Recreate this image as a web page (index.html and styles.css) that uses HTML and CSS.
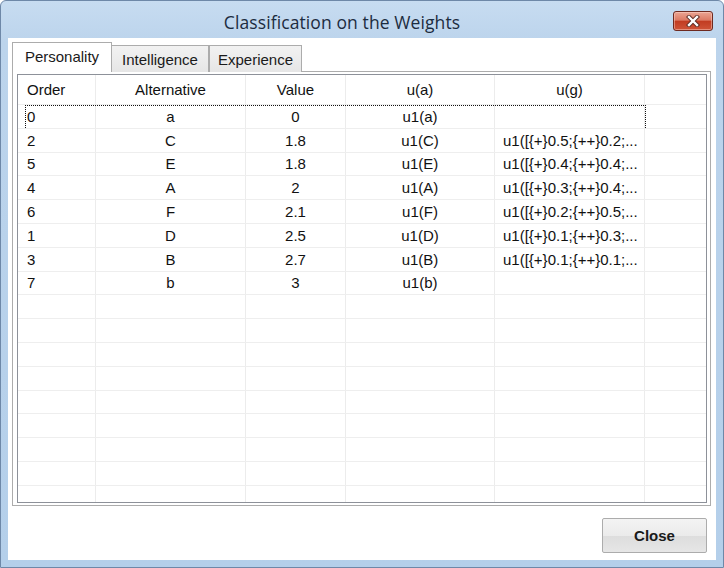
FILE: index.html
```html
<!DOCTYPE html>
<html>
<head>
<meta charset="utf-8">
<link rel="stylesheet" href="styles.css">
</head>
<body>
<div class="window">
  <div class="titlebar">
    <div class="title">Classification on the Weights</div>
    <div class="xbtn">
      <svg width="14" height="12" viewBox="0 0 14 12">
        <path d="M3 2 L11 10 M11 2 L3 10" stroke="#5a2a22" stroke-width="4.2" stroke-linecap="square" fill="none"/>
        <path d="M3 2 L11 10 M11 2 L3 10" stroke="#ffffff" stroke-width="2.4" stroke-linecap="square" fill="none"/>
      </svg>
    </div>
  </div>
  <div class="client">
    <div class="tabs">
      <div class="tab active">Personality</div>
      <div class="tab t2">Intelligence</div>
      <div class="tab t3">Experience</div>
    </div>
    <div class="panel">
      <div class="grid">
        <div class="row head">
          <div class="c c1">Order</div><div class="c c2">Alternative</div><div class="c c3">Value</div><div class="c c4">u(a)</div><div class="c c5">u(g)</div><div class="c c6"></div>
        </div>
        <div class="row focused">
          <div class="c c1">0</div><div class="c c2">a</div><div class="c c3">0</div><div class="c c4">u1(a)</div><div class="c c5"></div><div class="c c6"></div>
          <div class="focus"></div>
        </div>
        <div class="row"><div class="c c1">2</div><div class="c c2">C</div><div class="c c3">1.8</div><div class="c c4">u1(C)</div><div class="c c5 g">u1([{+}0.5;{++}0.2;...</div><div class="c c6"></div></div>
        <div class="row"><div class="c c1">5</div><div class="c c2">E</div><div class="c c3">1.8</div><div class="c c4">u1(E)</div><div class="c c5 g">u1([{+}0.4;{++}0.4;...</div><div class="c c6"></div></div>
        <div class="row"><div class="c c1">4</div><div class="c c2">A</div><div class="c c3">2</div><div class="c c4">u1(A)</div><div class="c c5 g">u1([{+}0.3;{++}0.4;...</div><div class="c c6"></div></div>
        <div class="row"><div class="c c1">6</div><div class="c c2">F</div><div class="c c3">2.1</div><div class="c c4">u1(F)</div><div class="c c5 g">u1([{+}0.2;{++}0.5;...</div><div class="c c6"></div></div>
        <div class="row"><div class="c c1">1</div><div class="c c2">D</div><div class="c c3">2.5</div><div class="c c4">u1(D)</div><div class="c c5 g">u1([{+}0.1;{++}0.3;...</div><div class="c c6"></div></div>
        <div class="row"><div class="c c1">3</div><div class="c c2">B</div><div class="c c3">2.7</div><div class="c c4">u1(B)</div><div class="c c5 g">u1([{+}0.1;{++}0.1;...</div><div class="c c6"></div></div>
        <div class="row"><div class="c c1">7</div><div class="c c2">b</div><div class="c c3">3</div><div class="c c4">u1(b)</div><div class="c c5"></div><div class="c c6"></div></div>
        <div class="row"><div class="c c1"></div><div class="c c2"></div><div class="c c3"></div><div class="c c4"></div><div class="c c5"></div><div class="c c6"></div></div>
        <div class="row"><div class="c c1"></div><div class="c c2"></div><div class="c c3"></div><div class="c c4"></div><div class="c c5"></div><div class="c c6"></div></div>
        <div class="row"><div class="c c1"></div><div class="c c2"></div><div class="c c3"></div><div class="c c4"></div><div class="c c5"></div><div class="c c6"></div></div>
        <div class="row"><div class="c c1"></div><div class="c c2"></div><div class="c c3"></div><div class="c c4"></div><div class="c c5"></div><div class="c c6"></div></div>
        <div class="row"><div class="c c1"></div><div class="c c2"></div><div class="c c3"></div><div class="c c4"></div><div class="c c5"></div><div class="c c6"></div></div>
        <div class="row"><div class="c c1"></div><div class="c c2"></div><div class="c c3"></div><div class="c c4"></div><div class="c c5"></div><div class="c c6"></div></div>
        <div class="row"><div class="c c1"></div><div class="c c2"></div><div class="c c3"></div><div class="c c4"></div><div class="c c5"></div><div class="c c6"></div></div>
        <div class="row"><div class="c c1"></div><div class="c c2"></div><div class="c c3"></div><div class="c c4"></div><div class="c c5"></div><div class="c c6"></div></div>
        <div class="row"><div class="c c1"></div><div class="c c2"></div><div class="c c3"></div><div class="c c4"></div><div class="c c5"></div><div class="c c6"></div></div>
      </div>
    </div>
    <div class="footer">
      <button class="close">Close</button>
    </div>
  </div>
</div>
</body>
</html>
```
FILE: styles.css
```css
html, body {
  margin: 0;
  padding: 0;
  width: 724px;
  height: 568px;
  overflow: hidden;
}
.window {
  box-sizing: border-box;
  width: 724px;
  height: 568px;
  border: 1px solid #6e88a8;
  border-radius: 6px 6px 0 0;
  background: linear-gradient(to bottom, #c7dcf1 0px, #bcd4ec 40px, #b4cfea 100%);
  display: flex;
  flex-direction: column;
}
.titlebar {
  height: 37px;
  display: flex;
  align-items: flex-start;
}
.title {
  flex: 1;
  text-align: center;
  padding-left: 10px;
  padding-top: 10px;
  font-family: "Open Sans", "Noto Sans", sans-serif;
  font-size: 17.5px;
  letter-spacing: 0.1px;
  color: #1c2c40;
  line-height: 22px;
}
.xbtn {
  margin-top: 10px;
  margin-right: 10px;
  width: 40px;
  height: 20px;
  box-sizing: border-box;
  border: 1px solid #6e2a20;
  border-radius: 3px;
  background: linear-gradient(to bottom, #eba593 0%, #dc7a64 45%, #c23c22 52%, #cf5438 100%);
  box-shadow: inset 0 0 0 1px rgba(255,220,210,0.45);
  display: flex;
  align-items: center;
  justify-content: center;
}
.client {
  flex: 1;
  margin: 0 7px 7px 7px;
  background: #ffffff;
  display: flex;
  flex-direction: column;
}
.tabs {
  display: flex;
  align-items: flex-end;
  height: 30px;
  margin: 4px 0 -1px 4px;
  position: relative;
  z-index: 1;
}
.tab {
  box-sizing: border-box;
  height: 27px;
  border: 1px solid #acacac;
  border-bottom: none;
  background: linear-gradient(to bottom, #f2f2f2, #e6e6e6);
  font-family: "Liberation Sans", Arial, sans-serif;
  font-size: 15px;
  color: #1a1a1a;
  display: flex;
  align-items: center;
  justify-content: center;
  padding-top: 0;
}
.tab.active {
  width: 100px;
  height: 30px;
  background: #ffffff;
  padding-top: 0;
  padding-bottom: 2px;
}
.tab.t2 { width: 97px; border-left: none; }
.tab.t3 { width: 93px; border-left: 1px solid #acacac; }
.panel {
  box-sizing: border-box;
  height: 435px;
  margin: 0 5px 0 4px;
  border: 1px solid #acacac;
  padding: 2px 3px 2px 4px;
  display: flex;
}
.grid {
  flex: 1;
  border: 1px solid #8d9199;
  overflow: hidden;
  font-family: "Liberation Sans", Arial, sans-serif;
  font-size: 15px;
  color: #111111;
}
.row {
  display: flex;
  height: 23.8px;
  box-sizing: border-box;
  border-bottom: 1px solid #eeeeee;
  position: relative;
}
.row.head {
  height: 30px;
}
.c {
  box-sizing: border-box;
  border-right: 1px solid #ececec;
  display: flex;
  align-items: center;
  justify-content: center;
  white-space: nowrap;
  overflow: hidden;
}
.c1 { width: 78px; justify-content: flex-start; padding-left: 9px; }
.c2 { width: 150px; }
.c3 { width: 100px; }
.c4 { width: 149px; }
.c5 { width: 150px; }
.c5.g { justify-content: flex-start; padding-left: 8px; }
.c6 { flex: 1; border-right: none; }
.focus {
  position: absolute;
  left: 7px;
  top: 0;
  width: 621px;
  height: 23px;
  box-sizing: border-box;
  border: 1px dotted #111111;
  border-bottom: none;
  pointer-events: none;
}
.footer {
  flex: 1;
  display: flex;
  justify-content: flex-end;
  align-items: flex-start;
  padding: 12px 9px 0 0;
}
.close {
  width: 105px;
  height: 35px;
  border: 1px solid #acacac;
  border-radius: 2px;
  background: linear-gradient(to bottom, #f3f3f3 0%, #ebebeb 50%, #dddddd 51%, #e6e6e6 100%);
  font-family: "Liberation Sans", Arial, sans-serif;
  font-weight: bold;
  font-size: 15px;
  color: #1a1a1a;
  padding: 0;
}
```
